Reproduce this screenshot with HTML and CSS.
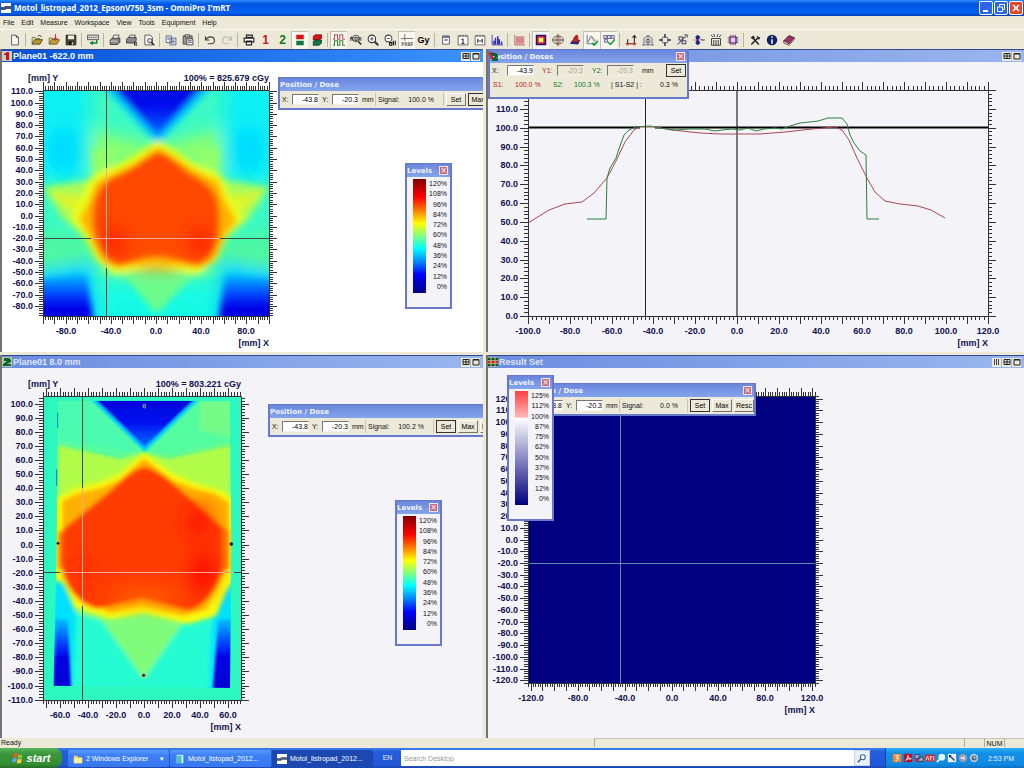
FILE: index.html
```html
<!DOCTYPE html>
<html lang="en">
<head>
    <meta charset="UTF-8">
    <meta name="viewport" content="width=device-width, initial-scale=1.0">
    <title>Motol_listropad_2012_EpsonV750_3sm - OmniPro I'mRT</title>
    <link rel="stylesheet" href="styles.css">
</head>
<body>

    <header class="titlebar">
        <svg class="app-icon" viewBox="0 0 10 10"><rect width="10" height="10" fill="#fff"/><path d="M0 4h3l1-1h6v3H5L4 7H0z" fill="#456"/></svg>
        <h1>Motol_listropad_2012_EpsonV750_3sm - OmniPro I'mRT</h1>
        <div class="win-buttons">
            <button type="button" title="Minimize"><svg viewBox="0 0 12 12"><path d="M3 9h5" stroke="#fff" stroke-width="2"/></svg></button>
            <button type="button" title="Restore"><svg viewBox="0 0 12 12"><path d="M4.500 5V2.500h5v5H8M2.500 5h5v4.500h-5z" stroke="#fff" fill="none"/></svg></button>
            <button type="button" class="close" title="Close"><svg viewBox="0 0 12 12"><path d="M3 3l6 6M9 3l-6 6" stroke="#fff" stroke-width="1.600"/></svg></button>
        </div>
    </header>

    <nav class="menu">
        <a href="#">File</a>
        <a href="#">Edit</a>
        <a href="#">Measure</a>
        <a href="#">Workspace</a>
        <a href="#">View</a>
        <a href="#">Tools</a>
        <a href="#">Equipment</a>
        <a href="#">Help</a>
    </nav>

    <div class="toolbar">
        <button type="button" title="New"><svg viewBox="0 0 16 16"><path d="M3.500 1.500h6l3 3v10h-9zM9.500 1.500v3h3" fill="#fff" stroke="#333"/></svg></button>
        <span class="sep"></span>
        <button type="button" title="Open"><svg viewBox="0 0 16 16"><path d="M1.500 13.500v-9h4l1 1.500h5v2" fill="#ffe98a" stroke="#553"/><path d="M1.500 13.500l3-6h11l-3.500 6z" fill="#b79a2a" stroke="#332"/><path d="M9 3c2-2 4-1 5 1" fill="none" stroke="#222"/></svg></button>
        <button type="button" title="Import"><svg viewBox="0 0 16 16"><path d="M1.500 13.500v-8h4l1 1.500h5v2" fill="#ffe98a" stroke="#553"/><path d="M1.500 13.500l3-6h11l-3.500 6z" fill="#c8a030" stroke="#543"/><path d="M10 0v7M7.500 5l2.500 3 2.500-3" fill="none" stroke="#c33" stroke-width="1.500"/></svg></button>
        <button type="button" title="Save"><svg viewBox="0 0 16 16"><path d="M1.500 1.500h13v13h-13z" fill="#4a4a28" stroke="#111"/><path d="M4 2h8v5H4z" fill="#eee"/><path d="M5 10h7v4H5z" fill="#111"/><path d="M9 11h2v3H9z" fill="#eee"/></svg></button>
        <span class="sep"></span>
        <button type="button" title="Measure"><svg viewBox="0 0 16 16"><path d="M.5 1.500h15v6H.5z" fill="#ddd" stroke="#333"/><path d="M2 4.500h12" stroke="#333" stroke-dasharray="2 1"/><path d="M13 8v4H7" fill="none" stroke="#183" stroke-width="2"/><path d="M8 9v6l-5-3z" fill="#183"/></svg></button>
        <span class="sep"></span>
        <button type="button" title="Print"><svg viewBox="0 0 16 16"><path d="M4.500 6l2-4.500h7L12 6" fill="#fff" stroke="#333"/><path d="M1.500 8l3-2.500h10V11l-3 3h-10z" fill="#888" stroke="#222"/><path d="M2 9.500h9" stroke="#eee"/></svg></button>
        <button type="button" title="Print report"><svg viewBox="0 0 16 16"><path d="M3.500 5l2-3.500h7L11 5" fill="#fff" stroke="#333"/><path d="M.5 7l3-2.500h10V9l-3 3H.5z" fill="#888" stroke="#222"/><path d="M11.500 16v-5h2.500v2.500h-2.500M13 13.500l2 2.500" fill="none" stroke="#111"/></svg></button>
        <button type="button" title="Print preview"><svg viewBox="0 0 16 16"><path d="M2.500 1.500h7l3 3v10h-10z" fill="#fff" stroke="#333"/><circle cx="9" cy="9" r="3" fill="#cde" stroke="#222"/><path d="M11 11l4 4" stroke="#222" stroke-width="2"/></svg></button>
        <span class="sep"></span>
        <button type="button" title="Copy"><svg viewBox="0 0 16 16"><path d="M1.500 2.500h7v9h-7zM6.500 5.500h8v9h-8z" fill="#fff" stroke="#347"/><path d="M3 5h3M3 7h3M8 8h5M8 10h5M8 12h5" stroke="#347"/></svg></button>
        <button type="button" title="Paste"><svg viewBox="0 0 16 16"><path d="M1.500 2.500h12v11h-12z" fill="#998" stroke="#333"/><path d="M4 1h6v3H4z" fill="#ccc" stroke="#333"/><path d="M6.500 6.500h8v8h-8z" fill="#fff" stroke="#224"/><path d="M8 9h5M8 11h5" stroke="#224"/></svg></button>
        <span class="sep"></span>
        <button type="button" title="Undo"><svg viewBox="0 0 16 16"><path d="M2 3v5h5M2 8c3-5 11-6 12 0 0 3-2 5-5 5H5" fill="none" stroke="#444" stroke-width="1.500"/></svg></button>
        <button type="button" title="Redo" disabled><svg viewBox="0 0 16 16"><path d="M14 3v5H9M14 8c-3-5-11-6-12 0 0 3 2 5 5 5h4" fill="none" stroke="#bbb" stroke-width="1.500"/></svg></button>
        <span class="sep"></span>
        <button type="button" title="Print screen"><svg viewBox="0 0 16 16"><path d="M4.500 1.500h8v3h-8zM1.500 5.500h13v5h-13zM4.500 9.500h7v5h-7z" fill="#fff" stroke="#222" stroke-width="1.400"/></svg></button>
        <button type="button" class="num red">1</button>
        <button type="button" class="num green">2</button>
        <button type="button" class="pressed" title="Planes"><svg viewBox="0 0 16 16"><path d="M3 1h10v6H3z" fill="#d11"/><path d="M3 9h10v6H3z" fill="#174"/></svg></button>
        <button type="button" title="Cubes"><svg viewBox="0 0 16 16"><path d="M3 3l3-2h8v5l-3 2H3z" fill="#d11" stroke="#611"/><path d="M3 10l3-2h8v4l-3 3H3z" fill="#174" stroke="#132"/></svg></button>
        <span class="sep"></span>
        <button type="button" title="Profiles" class="pressed"><svg viewBox="0 0 16 16"><path d="M0 7h2V1h4v6h3V1h4v6h3" fill="none" stroke="#b55" stroke-width="1.400"/><path d="M0 15h2V9h4v6h3V9h4v6h3" fill="none" stroke="#383" stroke-width="1.400"/></svg></button>
        <button type="button" title="ROI"><svg viewBox="0 0 16 16"><circle cx="8" cy="6" r="4.500" fill="#ddd" stroke="#333"/><path d="M11 10l4 4" stroke="#222" stroke-width="2"/><path d="M1 9V4h2v2H1M3 6v3M6.500 4.500h3v4h-3zM12 4v5M14.500 4v5" fill="none" stroke="#111"/></svg></button>
        <button type="button" title="Zoom in"><svg viewBox="0 0 16 16"><circle cx="6.500" cy="6.500" r="5" fill="#fff" stroke="#333" stroke-width="1.400"/><path d="M4 6.500h5M6.500 4v5" stroke="#333"/><path d="M10 10l5 5" stroke="#333" stroke-width="2.500"/></svg></button>
        <button type="button" title="Zoom all"><svg viewBox="0 0 16 16"><circle cx="6" cy="6" r="4.500" fill="#fff" stroke="#444" stroke-width="1.400"/><path d="M4 6h4" stroke="#333"/><path d="M7.500 11.500h3V15h-3zM12.500 9v6M15 9v6" fill="none" stroke="#111" stroke-width="1.400"/></svg></button>
        <button type="button" class="pressed" title="Profile"><svg viewBox="0 0 16 16"><path d="M0 6h16M5 0v9" stroke="#555"/><path d="M1.500 16v-4.500H3V14M5.500 16v-4.500H7V14l1 2M9.500 11.500h2v4h-2zM13.500 16v-4.500H16M14 14h2" fill="none" stroke="#444"/></svg></button>
        <button type="button" class="gy">Gy</button>
        <span class="sep"></span>
        <button type="button" title="Single window"><svg viewBox="0 0 16 16"><path d="M3.500 2.500h9v11h-9z" fill="#fff" stroke="#334"/><path d="M4 4h8M6 8h4" stroke="#559" stroke-width="2"/></svg></button>
        <button type="button" title="Info window"><svg viewBox="0 0 16 16"><path d="M1.500 2.500h13v12h-13zM4 1v3M8 1v3M12 1v3" fill="#fff" stroke="#444"/><path d="M8 6v7M6 12.500h4M6 7.500h2" stroke="#222" stroke-width="1.300"/></svg></button>
        <button type="button" title="Measure window"><svg viewBox="0 0 16 16"><path d="M1.500 2.500h13v12h-13zM4 1v3M8 1v3M12 1v3" fill="#fff" stroke="#444"/><path d="M5 12V7l3 3 3-3v5" fill="none" stroke="#222" stroke-width="1.300"/></svg></button>
        <button type="button" title="Histogram"><svg viewBox="0 0 16 16"><path d="M1.500 1v13.500H16" fill="none" stroke="#228"/><path d="M3 14V9h2V5h2v9zM8 14V3h2v4h2v7zM13 14v-4h2v4z" fill="#33b"/></svg></button>
        <span class="sep"></span>
        <button type="button" title="Area"><svg viewBox="0 0 16 16"><path d="M4 3h11v10H4z" fill="#d98a88"/><path d="M2.500 1v13.500H16" fill="none" stroke="#944"/></svg></button>
        <span class="sep"></span>
        <button type="button" class="pressed" title="Isodose"><svg viewBox="0 0 16 16"><path d="M1 1h14v14H1z" fill="#217"/><path d="M3 3h10v10H3z" fill="#e23"/><path d="M5 5h6v6H5z" fill="#ff5"/></svg></button>
        <button type="button" title="Center"><svg viewBox="0 0 16 16"><ellipse cx="8" cy="8" rx="7" ry="5.500" fill="none" stroke="#533"/><ellipse cx="8" cy="8" rx="3" ry="5" fill="none" stroke="#955"/><path d="M0 8h16M8 0v16" stroke="#433"/></svg></button>
        <button type="button" title="3D view"><svg viewBox="0 0 16 16"><path d="M1 13l4-5h10l-3 6z" fill="#228"/><path d="M5 10c0-7 7-12 7-7l1 6c-2 3-6 3-8 1z" fill="#b22"/></svg></button>
        <button type="button" class="pressed" title="Curves"><svg viewBox="0 0 16 16"><path d="M1.500 1v12H12M2 11c3 0 2-8 5-8s2 8 6 8" fill="none" stroke="#357"/><path d="M3 9c2-2 3-5 6-3s3 3 5 2" fill="none" stroke="#a77"/><path d="M8 12l3 3 5-6" fill="none" stroke="#193" stroke-width="2"/></svg></button>
        <button type="button" class="pressed" title="Compare"><svg viewBox="0 0 16 16"><path d="M1 2h4v4H1zM6 2h4v4H6zM11 2h4v4h-4zM2 7h4v4H2z" fill="#dde" stroke="#447"/><path d="M7 11l3 3 6-7" fill="none" stroke="#193" stroke-width="2"/></svg></button>
        <span class="sep"></span>
        <button type="button" title="Shift"><svg viewBox="0 0 16 16"><path d="M1 13h14M3.500 13V7M12.500 13V3M10 5l2.500-3L15 5" fill="none" stroke="#422" stroke-width="1.500"/><path d="M2 12h3v3H2zM11 12h3v3h-3z" fill="#d33"/></svg></button>
        <button type="button" title="Normalize"><svg viewBox="0 0 16 16"><path d="M2.500 14V6l5.500-4 5.500 4v8M0 14.500h16M5.500 7.500h5v4h-5zM8 2v13" fill="none" stroke="#446"/></svg></button>
        <button type="button" title="Move"><svg viewBox="0 0 16 16"><circle cx="8" cy="8" r="4.500" fill="none" stroke="#335"/><path d="M8 0v5M8 11v5M0 8h5M11 8h5" stroke="#335" stroke-width="2"/></svg></button>
        <button type="button" title="Rotate"><svg viewBox="0 0 16 16"><path d="M2 14L14 2M4 4h5v4H4zM8 9h5v4H8z" fill="none" stroke="#446" stroke-width="1.400"/><path d="M11 1h4v4" fill="none" stroke="#335"/></svg></button>
        <button type="button" title="Smooth"><svg viewBox="0 0 16 16"><path d="M0 8h16" stroke="#b55"/><path d="M6 1l4 3-3 4 3 4-4 3-3-3 2-4-2-4z" fill="#228"/><path d="M10 8c2-3 3 3 5-1" fill="none" stroke="#335"/></svg></button>
        <button type="button" title="Detector"><svg viewBox="0 0 16 16"><path d="M2 6h12v9H2zM5 8v7M8 8v7M11 8v7M1 1l3 3M5 0l1 4M9 4l2-4M12 4l3-3" fill="none" stroke="#334" stroke-width="1.200"/></svg></button>
        <button type="button" title="Array"><svg viewBox="0 0 16 16"><path d="M4 4h8v8H4z" fill="#fbe" stroke="#426" stroke-width="1.500"/><path d="M5 1v3M8 1v3M11 1v3M5 12v3M8 12v3M11 12v3M1 5h3M1 8h3M1 11h3M12 5h3M12 8h3M12 11h3" stroke="#426"/></svg></button>
        <span class="sep"></span>
        <button type="button" title="Options"><svg viewBox="0 0 16 16"><path d="M3 14l9-9M5 5l8 9" stroke="#222" stroke-width="2"/><path d="M2 5l4-3 2 3-3 2zM10 2l5 3-2 3z" fill="#222"/></svg></button>
        <button type="button" title="About"><svg viewBox="0 0 16 16"><circle cx="8" cy="8" r="7" fill="#126"/><path d="M8 3v2M8 7v6" stroke="#fff" stroke-width="2"/></svg></button>
        <button type="button" title="Help"><svg viewBox="0 0 16 16"><path d="M1 9l7-7 7 3-7 8z" fill="#936" stroke="#312"/><path d="M1 9v3l7 3 7-8V5l-7 8z" fill="#eee" stroke="#513"/></svg></button>
    </div>

    <main class="workspace">

        <section class="pane active">
            <div class="pane-title">
                <svg class="pane-icon" viewBox="0 0 10 10"><rect width="10" height="10" fill="#d8c8c8"/><path d="M2 3l3-2h2v8H4V4H2z" fill="#c11"/></svg>
                <h2>Plane01 -622.0 mm</h2>
                <div class="pane-buttons">
                    <button type="button" title="Tile"><svg viewBox="0 0 8 8"><path d="M1 1.500h6v5H1zM4 1v6M1 4h6" fill="none" stroke="#222"/></svg></button>
                    <button type="button" title="Maximize"><svg viewBox="0 0 8 8"><path d="M1 1.500h6v5.500H1zM1 2h6" fill="none" stroke="#222"/></svg></button>
                </div>
            </div>
            <div class="pane-body">
                <svg class="plot" id="plane1" width="481" height="290" viewBox="2 62 481 290">
                    <defs>
                        <filter id="soft" x="-30%" y="-30%" width="160%" height="160%"><feGaussianBlur stdDeviation="9"/></filter>
                        <filter id="softer" x="-50%" y="-50%" width="200%" height="200%"><feGaussianBlur stdDeviation="24"/></filter>
                        <linearGradient id="blueDown" x1="0" y1="0" x2="0" y2="1">
                            <stop offset="0" stop-color="#0000d8"/><stop offset="0.500" stop-color="#0010f0"/><stop offset="1" stop-color="#0070ff"/>
                        </linearGradient>
                        <linearGradient id="blueUp" x1="0" y1="0" x2="0" y2="1">
                            <stop offset="0" stop-color="#00c0ff"/><stop offset="0.350" stop-color="#0040ff"/><stop offset="0.550" stop-color="#0000e8"/><stop offset="1" stop-color="#0000d0"/>
                        </linearGradient>
                    </defs>
                    <svg x="43" y="90" width="226" height="226" viewBox="0 0 676 676">
                        <rect width="676" height="676" fill="#3cfac4"/>
                        <g filter="url(#softer)">
                            <path d="M-60-60h190l10 220-10 110-190 10zM736-60H546l-10 220 10 110 190 10z" fill="#0cf0f4"/>
                            <ellipse cx="62" cy="180" rx="50" ry="70" fill="#00dcff"/>
                            <ellipse cx="614" cy="180" rx="50" ry="70" fill="#00dcff"/>
                            <path d="M-40 545l180-60 30 240H-40zM716 545l-180-60-30 240h230z" fill="#00d4ff"/>
                            <path d="M170 580h340v150H170z" fill="#14fae4"/>
                            <path d="M150 120l193 50 183-50 10 130-193-60-193 60z" fill="#8cff6c"/>
                            <path d="M-30 425l180 20 30 60-210 40zM706 425l-180 20-30 60 210 40z" fill="#50f8a0"/>
                        </g>
                        <g filter="url(#soft)">
                            <path d="M150 170l60 30-10 60-50 20zM526 170l-60 30 10 60 50 20z" fill="#94ff68"/>
                            <path d="M0 290l140-20 10 190L60 385zM676 290l-140-20-10 190 90-75z" fill="#a8fb56"/>
                            <path d="M20 305l110 15-30 60zM656 305l-110 15 30 60z" fill="#dcf52a"/>
                            <path d="M150 545l190-30 190 30-90 20-100 105-90-105z" fill="#6cfc8c"/>
                            <path d="M160-30h366L343 162z" fill="#00c8ff"/>
                            <path d="M188-30h310L343 138z" fill="url(#blueDown)"/>
                            <path d="M-40 570l170-20 26 180H-40zM716 570l-170-20-26 180h200z" fill="url(#blueUp)"/>
                            <path d="M343 155l-75 48-70 34-54 28-20 48-34 70 42 62 34 66 50 36 120-20 124 20 56-40 30-70 50-54-44-70-20-54-80-36-60-40z" fill="#eaff18" stroke="#eaff18" stroke-width="8"/>
                            <path d="M343 170l-65 46-70 34-50 26-20 54-30 56 36 62 34 60 44 24 120-24 124 24 44-24 32-70 38-46-36-66-20-54-76-36-60-40z" fill="#ffb400"/>
                            <path d="M343 184c-40 15-70 50-110 66s-60 30-74 66-14 80-4 116c12 50 36 80 66 92 30 8 60-20 122-20s100 30 130 16c34-20 50-60 54-110 2-30 2-60-8-90-12-30-40-50-70-66s-66-64-106-70z" fill="#ff4a00"/>
                        </g>
                        <g filter="url(#softer)">
                            <ellipse cx="215" cy="450" rx="28" ry="44" fill="#ff2400"/>
                            <ellipse cx="470" cy="450" rx="28" ry="44" fill="#ff2400"/>
                            <ellipse cx="343" cy="520" rx="70" ry="14" fill="#ff7c00"/>
                        </g>
                    </svg>
                    <path class="cursor" d="M106.500 90v226M43 238.500h226"/>
                    <path class="cursor-light" d="M106.500 168v100M91 238.500h129"/>
                </svg>
            </div>

            <form class="tool-window dose dose-1">
                <h3>Position / Dose</h3>
                <div class="dose-row">
                    <label for="x1">X:</label><input type="text" id="x1" value="-43.8">
                    <label for="y1">Y:</label><input type="text" id="y1" value="-20.3">
                    <span class="unit">mm</span>
                    <span class="signal">Signal:</span><output>100.0 %</output>
                    <button type="button">Set</button>
                    <button type="button" class="default">Max</button>
                    <button type="button">Resc</button>
                </div>
            </form>

            <div class="tool-window levels levels-1">
                <h3>Levels<button type="button" class="tool-close" title="Close">×</button></h3>
                <div class="levels-body">
                    <div class="scale jet"></div>
                    <ul>
                        <li>120%</li><li>108%</li><li>96%</li><li>84%</li><li>72%</li><li>60%</li>
                        <li>48%</li><li>36%</li><li>24%</li><li>12%</li><li>0%</li>
                    </ul>
                </div>
            </div>
        </section>

        <section class="pane">
            <div class="pane-title">
                <svg class="pane-icon over" viewBox="0 0 10 10"><path d="M0 3l2-2h3v7H2V4H0z" fill="#d22"/><path d="M3 2h5l2 2v2L8 7h2v3H4V8l3-3H4z" fill="#063"/></svg>
                <h2></h2>
                <div class="pane-buttons">
                    <button type="button" title="Tile"><svg viewBox="0 0 8 8"><path d="M1 1.500h6v5H1zM4 1v6M1 4h6" fill="none" stroke="#222"/></svg></button>
                    <button type="button" title="Maximize"><svg viewBox="0 0 8 8"><path d="M1 1.500h6v5.500H1zM1 2h6" fill="none" stroke="#222"/></svg></button>
                </div>
            </div>
            <div class="pane-body">
                <svg class="plot" id="profile" width="536" height="290" viewBox="488 62 536 290">
                    <path d="M737 90v226" stroke="#77777f" stroke-width="2"/>
                    <path d="M528 127.500h112M655 127.500h333" stroke="#000" stroke-width="2"/>
                    <polyline class="s1" points="528,223 549,210 565,204 582,202 594,193 607,178 616,161 625,142 634,130 639,127 655,127 672,130 700,133 720,134 760,134 785,132 812,129 835,127 842,130 849,140 857,158 868,180 875,192 885,201 900,204 918,206 931,210 945,218"/>
                    <polyline class="s2" points="587,219 606,219 607,178 610,168 616,158 620,146 624,135 629,130 636,127 650,126 660,128 675,130 690,129 705,129 715,131 722,130 732,129 740,130 748,128 756,131 764,129 775,128 782,129 790,126 800,123 810,122 818,121 828,118 842,118 847,124 850,135 854,143 860,151 866,155 867,219 879,219"/>
                    <path d="M645.500 90v226" stroke="#222"/>
                </svg>
            </div>

            <form class="tool-window doses">
                <h3>Position / Doses<button type="button" class="tool-close" title="Close">×</button></h3>
                <div class="doses-row">
                    <label for="px">X:</label><input type="text" id="px" value="-43.9">
                    <label for="py1" class="red">Y1:</label><input type="text" id="py1" value="-20.3" disabled>
                    <label for="py2" class="green">Y2:</label><input type="text" id="py2" value="-20.3" disabled>
                    <span>mm</span>
                    <button type="button" class="default">Set</button>
                </div>
                <div class="doses-values">
                    <span class="red">S1:</span><span class="red">100.0 %</span>
                    <span class="green">S2:</span><span class="green">100.3 %</span>
                    <span>| S1-S2 | :</span><span>0.3 %</span>
                </div>
            </form>
        </section>

        <section class="pane">
            <div class="pane-title">
                <svg class="pane-icon" viewBox="0 0 10 10"><rect width="10" height="10" fill="#b8c8a0"/><path d="M2 1h5l2 2v2L5 7h4v2H1V7l4-3H2z" fill="#063"/></svg>
                <h2>Plane01 8.0 mm</h2>
                <div class="pane-buttons">
                    <button type="button" title="Tile"><svg viewBox="0 0 8 8"><path d="M1 1.500h6v5H1zM4 1v6M1 4h6" fill="none" stroke="#222"/></svg></button>
                    <button type="button" title="Maximize"><svg viewBox="0 0 8 8"><path d="M1 1.500h6v5.500H1zM1 2h6" fill="none" stroke="#222"/></svg></button>
                </div>
            </div>
            <div class="pane-body">
                <svg class="plot" id="plane2" width="481" height="370" viewBox="2 368 481 370">
                    <defs>
                        <filter id="film" x="-20%" y="-20%" width="140%" height="140%"><feGaussianBlur stdDeviation="7"/></filter>
                        <filter id="glow" x="-50%" y="-50%" width="200%" height="200%"><feGaussianBlur stdDeviation="28"/></filter>
                        <filter id="edge"><feGaussianBlur stdDeviation="3"/></filter>
                        <clipPath id="sheet"><path d="M45 14l516 0 4 400-4 462-530-7 10-400z"/></clipPath>
                    </defs>
                    <svg x="43" y="396" width="198" height="304" viewBox="0 0 594 912">
                        <rect width="594" height="912" fill="#2cf8c0"/>
                        <g clip-path="url(#sheet)">
                            <path d="M45 14h516v130l-258 50L45 140z" fill="#54fca0"/>
                            <g filter="url(#film)">
                                <path d="M45 14h90l150 150-240-30z" fill="#48fab0"/>
                                <path d="M470 14h100v110l-100-20z" fill="#74fc88"/>
                                <path d="M40 144l190 41 73-14 73 14 190-41v186L303 230 40 300z" fill="#b0fc48"/>
                                <path d="M30 580l70 10 203 70 250-60 20 60v230H20z" fill="#28fcd0"/>
                                <path d="M30 560l35 0 36 60-10 280H20z" fill="#00e0ff"/>
                                <path d="M580 560l-45 10-26 80-15 250h90z" fill="#00e0ff"/>
                                <path d="M60 560l40 90 100 30 200 0 110-40 30-80z" fill="#80fc7c"/>
                                <path d="M160 650l280 0-138 200z" fill="#80fc7c"/>
                                <path d="M100 690h60l110 180H90zM500 690h-60L320 870h180z" fill="#28fcd4"/>
                            </g>
                            <g filter="url(#film)">
                                <path d="M303 170l-75 65-60 22-70 18-70 30v240l40 20 30 70 105 35 100-20 130 34 86-24 29-70 30-50V310l-50-28-70-20-70-30z" fill="#f8fa10"/>
                                <path d="M303 186l-70 64-60 26-65 14-50 24v230l50 50 90 58 100-22 120 30 70-18 40-80 30-50V320l-40-26-60-16-70-26z" fill="#ffb000"/>
                                <path d="M303 212c-50 14-80 56-110 80L60 400c-8 60-6 110 8 150 20 50 56 82 96 88l134-28 136 34c46-8 70-50 96-100l26-60V410L430 296c-40-36-86-76-127-84z" fill="#ff3c00"/>
                                <path d="M44 404h14v116H44zM538 400h22v120h-22z" fill="#ff7800"/>
                            </g>
                            <g filter="url(#glow)">
                                <ellipse cx="120" cy="530" rx="20" ry="36" fill="#ff1c00"/>
                                <ellipse cx="480" cy="530" rx="30" ry="64" fill="#ff0000"/>
                                <ellipse cx="465" cy="380" rx="36" ry="50" fill="#ff1400"/>
                                <ellipse cx="303" cy="608" rx="100" ry="12" fill="#ff8c00"/>
                            </g>
                            <g filter="url(#edge)">
                                <path d="M136 4h340L305 168z" fill="#00d0ff"/>
                                <path d="M150 4h312L305 154z" fill="url(#blueDown)"/>
                                <path d="M38 670h36l10 210H30zM526 670h50v210h-66z" fill="url(#blueUp)"/>
                            </g>
                        </g>
                        <path d="M44 50v45M41 220v50" stroke="#0080d0" stroke-width="3"/>
                        <ellipse cx="304" cy="30" rx="4" ry="6" fill="#246" stroke="#cdd" stroke-width="2"/>
                        <circle cx="302" cy="838" r="5" fill="#111" stroke="#d86" stroke-width="2"/>
                        <circle cx="45" cy="442" r="4" fill="#300"/>
                        <circle cx="565" cy="444" r="5" fill="#300"/>
                    </svg>
                    <path class="cursor" d="M82.500 396v304M43 572.500h198"/>
                    <path class="cursor-light" d="M82.500 488v118M60 572.500h174"/>
                </svg>
            </div>

            <form class="tool-window dose dose-2">
                <h3>Position / Dose</h3>
                <div class="dose-row">
                    <label for="x2">X:</label><input type="text" id="x2" value="-43.8">
                    <label for="y2">Y:</label><input type="text" id="y2" value="-20.3">
                    <span class="unit">mm</span>
                    <span class="signal">Signal:</span><output>100.2 %</output>
                    <button type="button" class="default">Set</button>
                    <button type="button">Max</button>
                    <button type="button">Resc</button>
                </div>
            </form>

            <div class="tool-window levels levels-2">
                <h3>Levels<button type="button" class="tool-close" title="Close">×</button></h3>
                <div class="levels-body">
                    <div class="scale jet"></div>
                    <ul>
                        <li>120%</li><li>108%</li><li>96%</li><li>84%</li><li>72%</li><li>60%</li>
                        <li>48%</li><li>36%</li><li>24%</li><li>12%</li><li>0%</li>
                    </ul>
                </div>
            </div>
        </section>

        <section class="pane">
            <div class="pane-title">
                <svg class="pane-icon" viewBox="0 0 10 10"><rect width="10" height="10" fill="#8a8"/><path d="M0 2h10M0 8h10" stroke="#053" stroke-width="2"/><path d="M0 5h10" stroke="#d22" stroke-width="2"/><path d="M3 0v10M7 0v10" stroke="#db6"/></svg>
                <h2>Result Set</h2>
                <div class="pane-buttons">
                    <button type="button" title="List"><svg viewBox="0 0 8 8"><path d="M1.500 1v6M3.500 1v6M5.500 1v6" stroke="#444"/></svg></button>
                    <button type="button" title="Tile"><svg viewBox="0 0 8 8"><path d="M1 1.500h6v5H1zM4 1v6M1 4h6" fill="none" stroke="#222"/></svg></button>
                    <button type="button" title="Maximize"><svg viewBox="0 0 8 8"><path d="M1 1.500h6v5.500H1zM1 2h6" fill="none" stroke="#222"/></svg></button>
                </div>
            </div>
            <div class="pane-body">
                <svg class="plot" id="result" width="536" height="370" viewBox="488 368 536 370">
                    <rect x="528" y="396" width="287" height="287" fill="#000080"/>
                    <path d="M620.500 396v287M528 563.500h287" stroke="#5f8fa8"/>
                </svg>
            </div>

            <form class="tool-window dose dose-3">
                <h3>Position / Dose<button type="button" class="tool-close" title="Close">×</button></h3>
                <div class="dose-row">
                    <label for="x3">X:</label><input type="text" id="x3" value="-43.8">
                    <label for="y3">Y:</label><input type="text" id="y3" value="-20.3">
                    <span class="unit">mm</span>
                    <span class="signal">Signal:</span><output>0.0 %</output>
                    <button type="button" class="default">Set</button>
                    <button type="button">Max</button>
                    <button type="button">Resc</button>
                </div>
            </form>

            <div class="tool-window levels levels-3">
                <h3>Levels<button type="button" class="tool-close" title="Close">×</button></h3>
                <div class="levels-body">
                    <div class="scale diff"></div>
                    <ul>
                        <li>125%</li><li>112%</li><li>100%</li><li>87%</li><li>75%</li><li>62%</li>
                        <li>50%</li><li>37%</li><li>25%</li><li>12%</li><li>0%</li>
                    </ul>
                </div>
            </div>
        </section>
    </main>

    <div class="statusbar">
        <span class="ready">Ready</span>
        <span class="cell wide"></span>
        <span class="cell"></span>
        <span class="cell">NUM</span>
        <span class="cell"></span>
    </div>

    <footer class="taskbar">
        <button type="button" class="start">
            <svg viewBox="0 0 14 14"><path d="M2 2c2-1 3-1 4.500 0L5.500 6.500C4 5.500 3 5.500 1 6.500z" fill="#f2562a"/><path d="M7.500 2.500c2 1 3 1 5 0l-1 4.500c-2 1-3 1-5 0z" fill="#8c3"/><path d="M1 7.500c2-1 3-1 4.500 0L4.500 12C3 11 2 11 0 12z" fill="#5af"/><path d="M6.500 8c2 1 3 1 5 0l-1 4.500c-2 1-3 1-5 0z" fill="#fc3"/></svg>
            start
        </button>
        <button type="button" class="task"><svg viewBox="0 0 12 12"><path d="M1 2h4l1 2h5v7H1z" fill="#fc6"/><path d="M1 5h10v6H1z" fill="#fe9"/></svg>2 Windows Explorer<i>▾</i></button>
        <button type="button" class="task"><svg viewBox="0 0 12 12"><path d="M2 1h8v10H2z" fill="#cff"/><path d="M1 2h7v9H1z" fill="#5bc"/></svg>Motol_listopad_2012...</button>
        <button type="button" class="task current"><svg viewBox="0 0 12 12"><rect width="12" height="12" fill="#fff"/><path d="M0 5h4l1-1h7v3H6L5 8H0z" fill="#456"/></svg>Motol_listropad_2012...</button>
        <span class="lang">EN</span>
        <div class="search">
            <input type="text" placeholder="Search Desktop" aria-label="Search Desktop">
            <button type="button" title="Search"><svg viewBox="0 0 12 12"><circle cx="7" cy="5" r="3" fill="#fff" stroke="#369" stroke-width="1.300"/><path d="M5 7l-4 4" stroke="#369" stroke-width="1.800"/></svg></button>
        </div>
        <div class="tray">
            <svg viewBox="0 0 12 12"><rect x="1" y="1" width="10" height="10" fill="#e83"/><path d="M4 3h4L5 6h3l-3 4" fill="none" stroke="#fff"/></svg>
            <svg viewBox="0 0 12 12"><rect x="1" y="1" width="10" height="10" fill="#b12"/><path d="M3 9c2-2 3-4 3-6 0 3 2 4 4 4-3 0-5 0-7 2z" fill="none" stroke="#fff"/></svg>
            <svg viewBox="0 0 12 12"><path d="M1 2h6v5H1zM5 5h6v5H5z" fill="#aac" stroke="#335"/><path d="M1 7l4 4" stroke="#d22" stroke-width="2"/></svg>
            <svg viewBox="0 0 12 12"><rect y="2" width="12" height="8" fill="#d22"/><path d="M1 9l2-5 2 5M5 4.500h4M7 4v5M10.500 4v5" fill="none" stroke="#fff"/></svg>
            <svg viewBox="0 0 12 12"><circle cx="7" cy="5" r="4" fill="#dff"/><path d="M4 8l-3 3" stroke="#fff" stroke-width="2"/></svg>
            <svg viewBox="0 0 12 12"><rect x="1" y="1" width="10" height="10" fill="#eef"/><path d="M3 3l6 6M3 5V3h2" stroke="#235" stroke-width="1.500" fill="none"/></svg>
            <svg viewBox="0 0 12 12"><circle cx="6" cy="6" r="5" fill="#99a"/><path d="M3 5h3l2-2v6L6 7H3z" fill="#eee"/></svg>
            <svg viewBox="0 0 12 12"><circle cx="6" cy="6" r="5" fill="#bcd"/><circle cx="6" cy="6" r="3" fill="#567"/><path d="M6 4v2h2" stroke="#fff" fill="none"/></svg>
            <time>2:53 PM</time>
        </div>
    </footer>

    <script src="plots.js"></script>
</body>
</html>
```

FILE: styles.css
```css
* {
    box-sizing: border-box;
}
body {
    margin: 0;
    height: 100vh;
    display: flex;
    flex-direction: column;
    overflow: hidden;
    background-color: #ece9d8;
    font-family: "Liberation Sans", Arial, sans-serif;
    font-size: 7px;
    color: #111;
}
h1, h2, h3, ul {
    margin: 0;
    padding: 0;
}
button, input {
    font-family: inherit;
    font-size: inherit;
    padding: 0;
}
.red {
    color: #c01818;
}
.green {
    color: #0c7a20;
}

/* Title and menu */
.titlebar {
    flex: 0 0 16px;
    display: flex;
    align-items: center;
    gap: 3px;
    padding: 0 1px;
    background: linear-gradient(#2a8cff, #0454e0 25%, #0560f4 80%, #0340b8);
    color: #fff;
}
.titlebar h1 {
    flex: 1;
    font-family: "Noto Sans", sans-serif;
    font-size: 8px;
    font-weight: bold;
    line-height: 16px;
    white-space: nowrap;
}
.app-icon {
    width: 10px;
    height: 10px;
}
.win-buttons {
    display: flex;
    gap: 1px;
}
.win-buttons button {
    width: 14px;
    height: 14px;
    border: 1px solid #fff;
    border-radius: 2px;
    background-color: #2a66e8;
}
.win-buttons .close {
    background-color: #e0482a;
}
.win-buttons svg {
    display: block;
    width: 12px;
    height: 12px;
}
.menu {
    flex: 0 0 13px;
    display: flex;
    gap: 7px;
    padding-left: 3px;
    line-height: 13px;
}
.menu a {
    color: #111;
    text-decoration: none;
}

/* Toolbar */
.toolbar {
    flex: 0 0 20px;
    display: flex;
    align-items: center;
    padding-left: 6px;
    border-top: 1px solid #fbfaf4;
}
.toolbar button {
    flex: 0 0 17px;
    height: 18px;
    display: flex;
    align-items: center;
    justify-content: center;
    border: none;
    background: none;
}
.toolbar .pressed {
    background-color: #f8f6ee;
    box-shadow: inset 1px 1px #c4c0ae;
}
.toolbar svg {
    width: 12px;
    height: 12px;
}
.toolbar .num {
    font-size: 12px;
    font-weight: bold;
}
.toolbar .gy {
    font-size: 9px;
    font-weight: bold;
}
.sep {
    flex: 0 0 5px;
    height: 14px;
    background: linear-gradient(#b8b4a0, #b8b4a0) center / 1px 100% no-repeat;
}

/* Workspace panes */
.workspace {
    flex: 1;
    min-height: 0;
    display: grid;
    grid-template-columns: 483fr 538fr;
    grid-template-rows: 303fr 383fr;
    gap: 3px;
}
.pane {
    position: relative;
    min-width: 0;
    min-height: 0;
    overflow: hidden;
    border-left: 2px solid #74746c;
    background-color: #f4f4f8;
}
.pane.active {
    background-color: #fff;
}
.pane-title {
    height: 13px;
    display: flex;
    align-items: center;
    gap: 1px;
    padding-right: 3px;
    border-top: 1px solid #344a90;
    background: linear-gradient(90deg, #6c8ce0, #9ab6ee);
    color: #dfe6fa;
}
.pane.active .pane-title {
    background: linear-gradient(90deg, #0450d8, #3c94ff);
    color: #fff;
}
.pane-title h2 {
    flex: 1;
    font-size: 9px;
    line-height: 12px;
    white-space: nowrap;
}
.pane-icon {
    width: 10px;
    height: 10px;
}
.pane-icon.over {
    position: relative;
    z-index: 3;
}
.pane-buttons {
    display: flex;
    gap: 1px;
}
.pane-buttons button {
    width: 9px;
    height: 9px;
    border: none;
    background-color: #ece9d8;
}
.pane-buttons svg {
    display: block;
    width: 8px;
    height: 8px;
    margin: 0 auto;
}
.pane-body {
    overflow: hidden;
}

/* Plots */
.plot {
    display: block;
}
.plot text {
    font-size: 9px;
    font-weight: bold;
    fill: #101050;
}
.frame {
    fill: none;
    stroke: #333;
}
.ticks {
    stroke: #333;
}
.cursor {
    stroke: #3a4646;
}
.cursor-light {
    stroke: #f0a898;
}
.s1, .s2 {
    fill: none;
    stroke: #a84858;
}
.s2 {
    stroke: #2c8040;
}

/* Floating tool windows */
.tool-window {
    position: absolute;
    border: 2px solid #6878cc;
    border-top-width: 1px;
    background-color: #ece9d8;
}
.tool-window h3 {
    display: flex;
    align-items: center;
    justify-content: space-between;
    height: 13px;
    padding-right: 2px;
    background: linear-gradient(#6a86dc, #84a4ec);
    font-size: 7px;
    font-family: "DejaVu Sans", sans-serif;
    color: #f0f4ff;
    white-space: nowrap;
}
.tool-close {
    width: 9px;
    height: 9px;
    border: 1px solid #f4e4e8;
    background-color: #c46a80;
    color: #fff;
    font-size: 8px;
    line-height: 6px;
}
.tool-window input {
    width: 27px;
    height: 11px;
    border: 1px solid #f4f2e8;
    border-top-color: #777;
    border-left-color: #777;
    background-color: #fff;
    text-align: right;
}
.tool-window input:disabled {
    background-color: #ece9d8;
    color: #aaa690;
}
.dose-row button, .doses-row button {
    width: 20px;
    height: 13px;
    border: 1px solid #77756a;
    border-top-color: #fff;
    border-left-color: #fff;
    background-color: #ece9d8;
}
.dose-row .default, .doses-row .default {
    border: 1px solid #333;
}
.dose {
    width: 234px;
    height: 33px;
}
.dose-row {
    display: flex;
    align-items: center;
    gap: 2px;
    height: 17px;
    padding-left: 2px;
}
.dose-row label {
    width: 8px;
}
.dose-row label + input {
    margin-right: 1px;
}
.dose-row .unit {
    width: 14px;
    height: 13px;
    line-height: 13px;
    border-right: 1px solid #c8c4b4;
}
.dose-row .signal {
    width: 26px;
}
.dose-row output {
    width: 38px;
    height: 13px;
    line-height: 13px;
    padding-right: 9px;
    border-right: 1px solid #c8c4b4;
    text-align: right;
    white-space: nowrap;
}
.dose-1 {
    left: 276px;
    top: 28px;
}
.dose-2 {
    left: 266px;
    top: 49px;
}
.dose-3 {
    left: 34px;
    top: 28px;
}
.levels {
    width: 47px;
    height: 146px;
    background-color: #f4f4f8;
}
.levels-body {
    display: flex;
    justify-content: space-between;
    padding: 2px 3px 0 6px;
}
.scale {
    width: 13px;
    height: 114px;
}
.jet {
    background: linear-gradient(#800000, #f00 16%, #ff8000 28%, #ff0 39%, #80ff80 50%, #0ff 61%, #0080ff 73%, #00f 84%, #000080);
}
.diff {
    background: linear-gradient(#ff4040, #ffb8b8 23%, #fff 24%, #f4f4f8 27%, #000080);
}
.levels ul {
    height: 112px;
    display: flex;
    flex-direction: column;
    justify-content: space-between;
    list-style: none;
    text-align: right;
    line-height: 9px;
}
.levels-1 {
    left: 403px;
    top: 114px;
}
.levels-2 {
    left: 393px;
    top: 145px;
}
.levels-3 {
    left: 19px;
    top: 20px;
    z-index: 2;
}
.doses {
    left: 0;
    top: 0;
    width: 201px;
    height: 50px;
}
.doses-row {
    display: flex;
    align-items: center;
    gap: 4px;
    padding: 1px 1px 0 2px;
}
.doses-row label {
    width: 11px;
}
.doses-row input {
    margin-right: 4px;
}
.doses-row button {
    margin-left: auto;
}
.doses-values {
    display: grid;
    grid-template-columns: 22px 38px 21px 37px 49px 1fr;
    padding: 4px 2px 0 3px;
}

/* Status bar */
.statusbar {
    flex: 0 0 10px;
    display: flex;
    line-height: 10px;
}
.ready {
    flex: 0 0 58%;
    padding-left: 1px;
}
.cell {
    width: 20px;
    height: 9px;
    border-left: 1px solid #b0ac98;
    border-top: 1px solid #c8c4b0;
    text-align: center;
}
.cell.wide {
    flex: 1;
}

/* Taskbar */
.taskbar {
    flex: 0 0 20px;
    display: flex;
    align-items: stretch;
    background: linear-gradient(#3c80f0, #245cdc 20%, #2258d8 85%, #1a44b0);
    color: #e8f0ff;
}
.taskbar svg {
    flex: none;
    width: 10px;
    height: 10px;
}
.start {
    width: 62px;
    margin-right: 6px;
    display: flex;
    align-items: center;
    justify-content: center;
    gap: 3px;
    border: none;
    border-radius: 0 8px 8px 0;
    background: linear-gradient(#5cb45c, #3a963a 30%, #358f35 80%, #246c24);
    color: #fff;
    font-size: 11px;
    font-weight: bold;
    font-style: italic;
}
.start svg {
    width: 12px;
    height: 12px;
}
.task {
    width: 101px;
    margin: 2px 1px 1px 0;
    padding: 0 5px;
    display: flex;
    align-items: center;
    gap: 3px;
    border: none;
    border-radius: 2px;
    background: linear-gradient(#5a9cff, #3c80f4 30%, #3878ee);
    color: #fff;
    white-space: nowrap;
}
.task i {
    margin-left: auto;
    font-style: normal;
}
.task.current {
    background: #1c48b0;
}
.lang {
    width: 27px;
    line-height: 20px;
    text-align: center;
}
.search {
    flex: 1;
    display: flex;
    margin: 2px 15px 2px 0;
    background-color: #fff;
}
.search input {
    flex: 1;
    padding-left: 3px;
    border: none;
}
.search input::placeholder {
    color: #999;
}
.search button {
    width: 16px;
    border: 1px solid #c8d4e8;
    background-color: #e8f0fa;
}
.tray {
    width: 139px;
    display: flex;
    align-items: center;
    gap: 1px;
    padding-left: 6px;
    border-left: 1px solid #1440a0;
    background: linear-gradient(#30b0f8, #1290e8 25%, #1088e0 85%, #0c6cc0);
}
.tray svg {
    width: 10px;
    height: 10px;
}
.tray time {
    margin-left: 8px;
}
```

FILE: plots.js
```js
const SVG_NS = 'http://www.w3.org/2000/svg';

// x0/y0 is the pixel of value 0, sx/sy are pixels per mm (or per %)
const plots = [
    { id: 'plane1', left: 43, top: 90, right: 269, bottom: 316, x0: 156, y0: 215.5, sx: 1.13, sy: 1.13,
      xLabels: [-80, 80, 40], yLabels: [-80, 110, 10], dose: '100% = 825.679 cGy', yTitle: true },
    { id: 'profile', left: 528, top: 90, right: 988, bottom: 316, x0: 737, y0: 316, sx: 2.09, sy: 1.883,
      xLabels: [-100, 120, 20], yLabels: [0, 110, 10] },
    { id: 'plane2', left: 43, top: 396, right: 241, bottom: 700, x0: 144, y0: 544.5, sx: 1.405, sy: 1.41,
      xLabels: [-60, 60, 20], yLabels: [-110, 100, 10], dose: '100% = 803.221 cGy', yTitle: true },
    { id: 'result', left: 528, top: 396, right: 815, bottom: 683, x0: 671.5, y0: 539.5, sx: 1.173, sy: 1.173,
      xLabels: [-120, 120, 40], yLabels: [-120, 120, 10] }
];

function addText(svg, x, y, anchor, value) {
    const text = document.createElementNS(SVG_NS, 'text');
    text.setAttribute('x', x);
    text.setAttribute('y', y);
    text.setAttribute('text-anchor', anchor);
    text.textContent = value;
    svg.appendChild(text);
}

function drawAxes(p) {
    const svg = document.getElementById(p.id);
    let d = '';

    // Vertical ticks below and above the frame
    for (let v = -140; v <= 140; v += 2) {
        const x = Math.round(p.x0 + v * p.sx) + 0.5;
        if (x < p.left || x > p.right + 1) continue;
        const len = v % 10 === 0 ? 8 : 4;
        d += `M${x} ${p.bottom}v${len}M${x} ${p.top}v${-len}`;
    }
    // Horizontal ticks on both sides
    for (let v = -140; v <= 140; v += 2) {
        const y = Math.round(p.y0 - v * p.sy) + 0.5;
        if (y < p.top || y > p.bottom + 1) continue;
        const len = v % 10 === 0 ? 8 : 4;
        d += `M${p.left} ${y}h${-len}M${p.right} ${y}h${len}`;
    }
    const ticks = document.createElementNS(SVG_NS, 'path');
    ticks.setAttribute('class', 'ticks');
    ticks.setAttribute('d', d);
    svg.appendChild(ticks);

    const frame = document.createElementNS(SVG_NS, 'path');
    frame.setAttribute('class', 'frame');
    frame.setAttribute('d', `M${p.left + 0.5} ${p.top + 0.5}H${p.right + 0.5}V${p.bottom + 0.5}H${p.left + 0.5}z`);
    svg.appendChild(frame);

    for (let v = p.xLabels[0]; v <= p.xLabels[1]; v += p.xLabels[2]) {
        addText(svg, Math.round(p.x0 + v * p.sx), p.bottom + 18, 'middle', v.toFixed(1));
    }
    for (let v = p.yLabels[0]; v <= p.yLabels[1]; v += p.yLabels[2]) {
        addText(svg, p.left - 10, Math.round(p.y0 - v * p.sy) + 3, 'end', v.toFixed(1));
    }
    addText(svg, p.right, p.bottom + 30, 'end', '[mm] X');
    if (p.yTitle) {
        addText(svg, p.left - 15, p.top - 9, 'start', '[mm] Y');
        addText(svg, p.right, p.top - 9, 'end', p.dose);
    }
}

plots.forEach(drawAxes);
```
